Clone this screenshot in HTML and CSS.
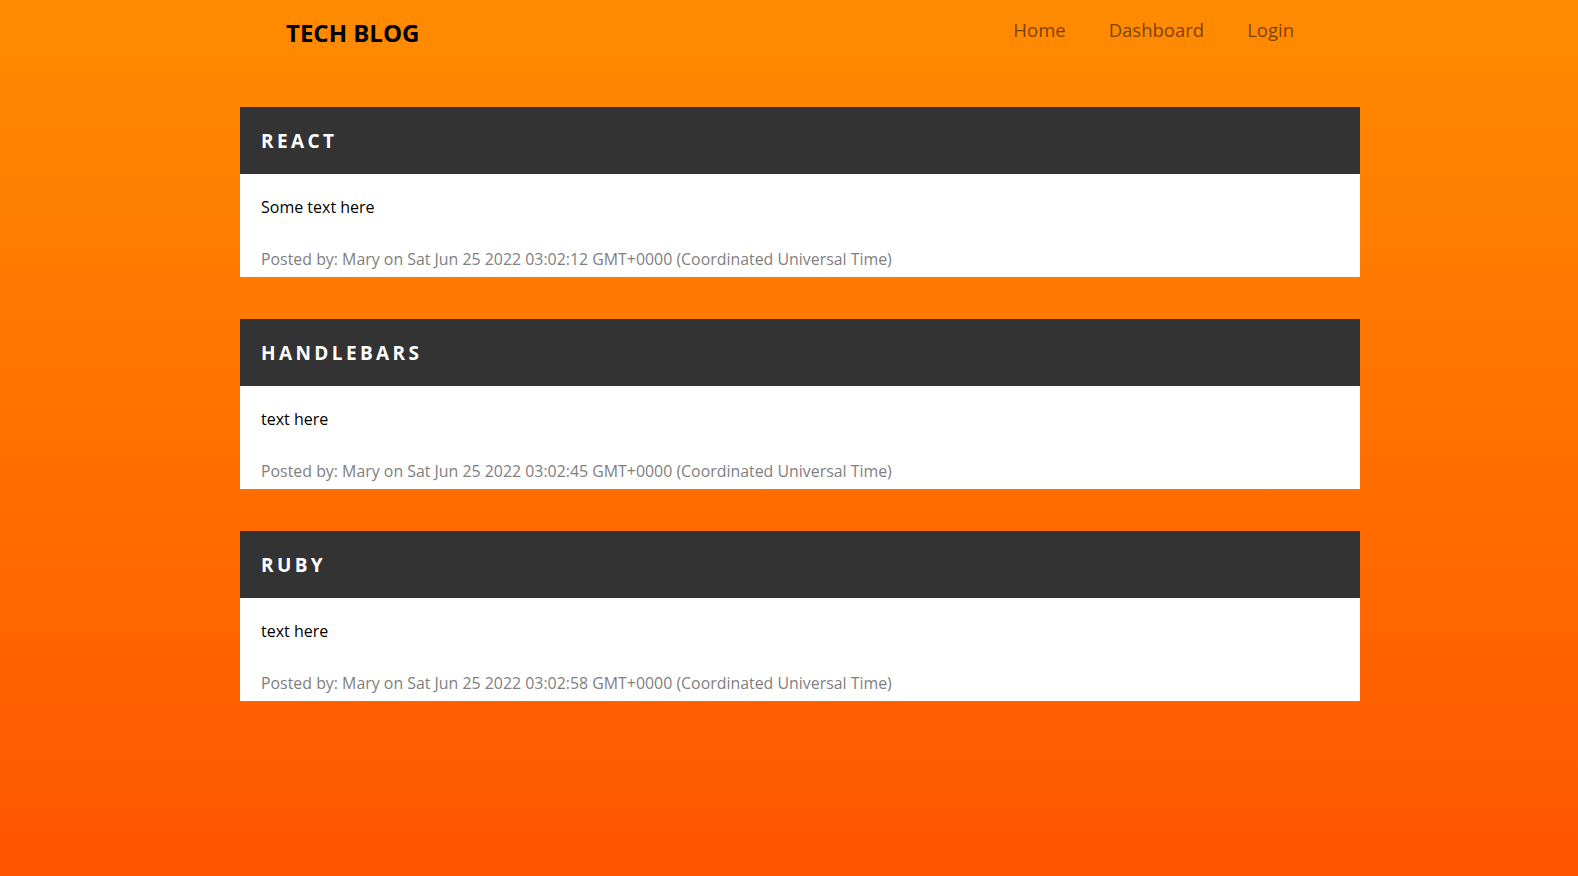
FILE: index.html
```html
<!DOCTYPE html>
<html lang="en">
<head>
<meta charset="utf-8">
<title>Tech Blog</title>
<link rel="stylesheet" href="styles.css">
</head>
<body>
<header class="site-header">
  <h1 class="brand">TECH BLOG</h1>
  <nav class="nav">
    <a class="nav-link" href="#">Home</a>
    <a class="nav-link" href="#">Dashboard</a>
    <a class="nav-link" href="#">Login</a>
  </nav>
</header>
<main class="posts">
  <article class="post">
    <h2 class="post-title">REACT</h2>
    <div class="post-body">
      <p class="post-text">Some text here</p>
      <p class="post-meta">Posted by: Mary on Sat Jun 25 2022 03:02:12 GMT+0000 (Coordinated Universal Time)</p>
    </div>
  </article>
  <article class="post">
    <h2 class="post-title">HANDLEBARS</h2>
    <div class="post-body">
      <p class="post-text">text here</p>
      <p class="post-meta">Posted by: Mary on Sat Jun 25 2022 03:02:45 GMT+0000 (Coordinated Universal Time)</p>
    </div>
  </article>
  <article class="post">
    <h2 class="post-title">RUBY</h2>
    <div class="post-body">
      <p class="post-text">text here</p>
      <p class="post-meta">Posted by: Mary on Sat Jun 25 2022 03:02:58 GMT+0000 (Coordinated Universal Time)</p>
    </div>
  </article>
</main>
</body>
</html>
```
FILE: styles.css
```css
html, body {
  margin: 0;
  padding: 0;
}
body {
  min-height: 876px;
  background: linear-gradient(to bottom, #ff8c00 0%, #ff5500 100%);
  font-family: "Open Sans", "Noto Sans", sans-serif;
  color: #212529;
}
.site-header {
  display: flex;
  justify-content: space-between;
  align-items: center;
  height: 66px;
  padding: 0 284px 0 286px;
}
.brand {
  margin: 0;
  font-size: 24px;
  font-weight: 700;
  color: #000;
  line-height: 1;
}
.nav {
  display: flex;
  gap: 43px;
  margin-top: -7px;
}
.nav-link {
  font-size: 18.5px;
  color: rgba(0, 0, 0, 0.55);
  text-decoration: none;
}
.posts {
  display: flex;
  flex-direction: column;
  gap: 42px;
  width: 1120px;
  margin: 41px 0 0 240px;
}
.post {
  background: #fff;
}
.post-title {
  margin: 0;
  height: 67px;
  display: flex;
  align-items: center;
  padding: 0 21px;
  background: #333;
  color: #fff;
  font-size: 19px;
  font-weight: 700;
  letter-spacing: 3.4px;
}
.post-body {
  padding: 21px 21px 6px;
}
.post-text {
  margin: 0 0 28px;
  font-size: 16px;
  line-height: 24px;
  color: #000;
}
.post-meta {
  margin: 0;
  font-size: 15.9px;
  line-height: 24px;
  color: #808080;
}
```
